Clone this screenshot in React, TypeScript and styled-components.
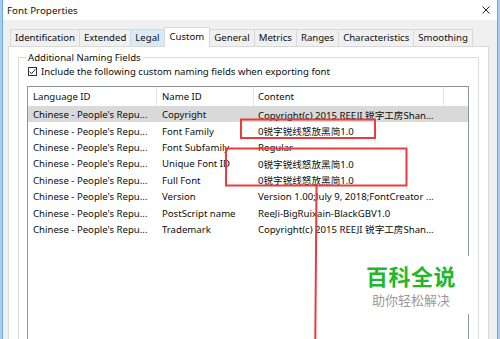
import React from "react";
import styled, { createGlobalStyle } from "styled-components";

const FONT = `"Noto Sans", "Noto Sans CJK SC", sans-serif`;
const CJK = `"Noto Sans CJK SC", "Noto Sans", sans-serif`;

const Global = createGlobalStyle`
  html, body { margin: 0; padding: 0; width: 500px; height: 339px; overflow: hidden; background: #a9cdee; }
  #root { width: 500px; height: 339px; }
`;

const Screen = styled.div`
  position: relative;
  width: 500px;
  height: 339px;
  overflow: hidden;
  font-family: ${FONT};
`;

const Window = styled.div`
  margin-left: 2px;
  width: 494px;
  height: 339px;
  border-left: 1px solid #6ea8de;
  border-right: 1px solid #6ea8de;
  background: #f0f0f0;
  display: flex;
  flex-direction: column;
  color: #0d0d0d;
  font-size: 9.6px;
`;

const TitleBar = styled.div`
  height: 20px;
  flex: none;
  background: #ffffff;
  display: flex;
  align-items: center;
  justify-content: space-between;
  padding: 0 7px 0 4px;
  font-size: 9.8px;
  color: #111;
`;

const CloseIcon = styled.svg`
  width: 8px;
  height: 8px;
  display: block;
`;

const Body = styled.div`
  flex: 1;
  display: flex;
  flex-direction: column;
  padding: 6px 8px 0 5px;
  min-height: 0;
`;

const TabRow = styled.div`
  height: 20px;
  flex: none;
  display: flex;
  align-items: flex-end;
  padding-left: 2px;
  position: relative;
  z-index: 1;
`;

const Tab = styled.div<{ $selected?: boolean; $hover?: boolean }>`
  height: ${(p) => (p.$selected ? 20 : 17)}px;
  margin-bottom: ${(p) => (p.$selected ? -1 : 0)}px;
  margin-left: -1px;
  padding: 0 ${(p) => (p.$selected ? 5 : 4)}px ${(p) => (p.$selected ? 3 : 1)}px;
  box-sizing: border-box;
  display: flex;
  align-items: center;
  border: 1px solid ${(p) => (p.$hover ? "#c5def5" : "#d9d9d9")};
  border-bottom: none;
  background: ${(p) => (p.$selected ? "#ffffff" : p.$hover ? "#d8e9f8" : "#f0f0f0")};
  white-space: nowrap;
  position: relative;
  z-index: ${(p) => (p.$selected ? 2 : 1)};
  &:first-child { margin-left: 0; }
`;

const Panel = styled.div`
  flex: 1;
  background: #ffffff;
  border: 1px solid #d9d9d9;
  border-bottom: none;
  padding: 3px 9px 0 9px;
  min-height: 0;
  display: flex;
  flex-direction: column;
`;

const Group = styled.fieldset`
  margin: 0;
  padding: 0 9px 0 8px;
  border: 1px solid #dcdcdc;
  border-bottom: none;
  min-width: 0;
  flex: 1;
  display: flex;
  flex-direction: column;
`;

const GroupTitle = styled.legend`
  padding: 0 2px 0 1px;
  line-height: 15px;
  font-size: 9.6px;
`;

const CheckRow = styled.label`
  display: flex;
  align-items: center;
  gap: 4px;
  height: 15px;
  margin-top: -1px;
  margin-left: 1px;
  white-space: nowrap;
`;

const CheckBox = styled.span`
  width: 9px;
  height: 9px;
  box-sizing: border-box;
  border: 1px solid #333;
  background: #fff;
  display: flex;
  align-items: center;
  justify-content: center;
`;

const List = styled.div`
  margin-top: 7px;
  flex: 1;
  border: 1px solid #8f939a;
  border-bottom: none;
  background: #ffffff;
  display: flex;
  flex-direction: column;
`;

const GRID = "129px 97px 190px";

const HeaderRow = styled.div`
  display: grid;
  grid-template-columns: ${GRID};
  height: 19px;
`;

const HeaderCell = styled.div<{ $pad: number }>`
  padding-left: ${(p) => p.$pad}px;
  border-right: 1px solid #e5e5e5;
  display: flex;
  align-items: center;
  white-space: nowrap;
`;

const Row = styled.div<{ $selected?: boolean }>`
  display: grid;
  grid-template-columns: ${GRID};
  height: 16.4px;
  background: ${(p) => (p.$selected ? "#d9d9d9" : "transparent")};
`;

const Cell = styled.div<{ $pad: number }>`
  padding-left: ${(p) => p.$pad}px;
  padding-top: 1px;
  display: flex;
  align-items: center;
  white-space: nowrap;
  overflow: hidden;
  font-family: ${FONT};
`;

const Marks = styled.svg`
  position: absolute;
  left: 0;
  top: 0;
  width: 500px;
  height: 339px;
  pointer-events: none;
`;

const Watermark = styled.div`
  position: absolute;
  left: 352px;
  top: 256px;
  width: 118px;
  height: 58px;
  background: #ffffff;
  display: flex;
  flex-direction: column;
  align-items: center;
  justify-content: center;
  font-family: ${CJK};
`;

const WmTitle = styled.div`
  font-size: 22px;
  line-height: 26px;
  font-weight: 700;
  color: #22b82a;
  letter-spacing: 0.5px;
`;

const WmSub = styled.div`
  font-size: 13px;
  line-height: 17px;
  color: #9a9a9a;
  margin-top: 3px;
`;

const tabs = [
  "Identification",
  "Extended",
  "Legal",
  "Custom",
  "General",
  "Metrics",
  "Ranges",
  "Characteristics",
  "Smoothing",
];

const LANG = "Chinese - People's Repu...";
const FF = "0锐字锐线怒放黑简1.0";

const rows: [string, string][] = [
  ["Copyright", "Copyright(c) 2015 REEJI 锐字工房Shan..."],
  ["Font Family", FF],
  ["Font Subfamily", "Regular"],
  ["Unique Font ID", FF],
  ["Full Font", FF],
  ["Version", "Version 1.00;July 9, 2018;FontCreator ..."],
  ["PostScript name", "ReeJi-BigRuixain-BlackGBV1.0"],
  ["Trademark", "Copyright(c) 2015 REEJI 锐字工房Shan..."],
];

export default function App() {
  return (
    <Screen>
      <Global />
      <Window>
        <TitleBar>
          <span>Font Properties</span>
          <CloseIcon viewBox="0 0 8 8">
            <path d="M0.5 0.5 L7.5 7.5 M7.5 0.5 L0.5 7.5" stroke="#222" strokeWidth="1" fill="none" />
          </CloseIcon>
        </TitleBar>
        <Body>
          <TabRow>
            {tabs.map((t) => (
              <Tab key={t} $selected={t === "Custom"} $hover={t === "Legal"}>
                {t}
              </Tab>
            ))}
          </TabRow>
          <Panel>
            <Group>
              <GroupTitle>Additional Naming Fields</GroupTitle>
              <CheckRow>
                <CheckBox>
                  <svg width="7" height="7" viewBox="0 0 7 7">
                    <path d="M0.6 3.6 L2.6 5.6 L6.4 1.2" stroke="#222" strokeWidth="1" fill="none" />
                  </svg>
                </CheckBox>
                Include the following custom naming fields when exporting font
              </CheckRow>
              <List>
                <HeaderRow>
                  <HeaderCell $pad={5}>Language ID</HeaderCell>
                  <HeaderCell $pad={5}>Name ID</HeaderCell>
                  <HeaderCell $pad={4}>Content</HeaderCell>
                </HeaderRow>
                {rows.map(([name, content], i) => (
                  <Row key={name} $selected={i === 0}>
                    <Cell $pad={5}>{LANG}</Cell>
                    <Cell $pad={5}>{name}</Cell>
                    <Cell $pad={4}>{content}</Cell>
                  </Row>
                ))}
              </List>
            </Group>
          </Panel>
        </Body>
      </Window>
      <Watermark>
        <WmTitle>百科全说</WmTitle>
        <WmSub>助你轻松解决</WmSub>
      </Watermark>
      <Marks viewBox="0 0 500 339">
        <rect x="241" y="119.5" width="134" height="18.5" stroke="#ec3a3d" strokeWidth="2" fill="none" />
        <rect x="226" y="148.5" width="180.5" height="37" stroke="#ec3a3d" strokeWidth="2" fill="none" />
        <path d="M316.5 186 L315.3 339" stroke="#ec3a3d" strokeWidth="2" fill="none" />
      </Marks>
    </Screen>
  );
}
